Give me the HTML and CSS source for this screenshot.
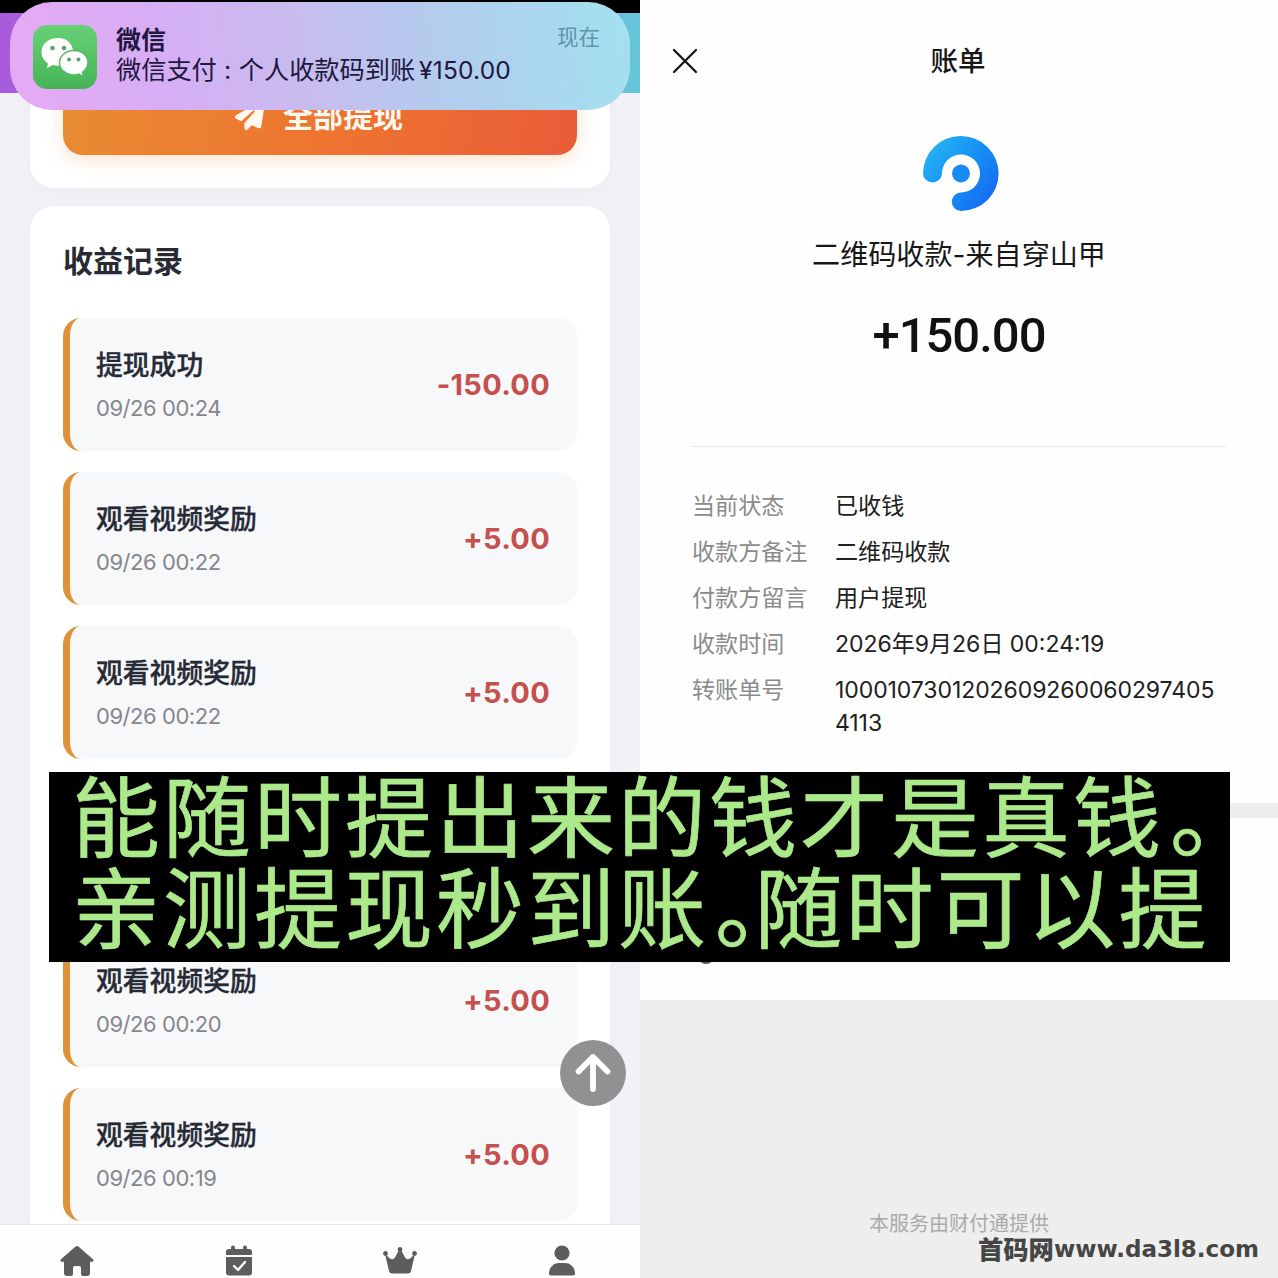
FILE: index.html
```
<!DOCTYPE html>
<html lang="zh-CN">
<head>
<meta charset="utf-8">
<title>账单</title>
<link rel="stylesheet" href="styles.css">
</head>
<body>
<div class="screen">
  <section class="wallet">
    <div class="status"></div>
    <div class="hero"></div>
    <div class="notice">
      <svg class="app-icon" viewBox="0 0 64 64">
        <defs><linearGradient id="wx" x1="0" y1="0" x2="0" y2="1"><stop offset="0" stop-color="#68d076"/><stop offset="1" stop-color="#45b456"/></linearGradient></defs>
        <rect width="64" height="64" rx="14" fill="url(#wx)"/>
        <path d="M25 13C15.500 13 8.500 19 8.500 27c0 5 2.700 9 6.500 11.500L14 43l6-3c8 2.500 20-2 20-13C40 19 34 13 25 13Z" fill="#fff"/>
        <path d="M41 25.500c-8 0-14.500 5.300-14.500 12.200S33 50 41 50c2 0 3.700-.3 5-.8l4.500 2.800-1-5c3.300-2.200 5.500-5.500 5.500-9.500 0-6.700-6-12-14-12Z" fill="#fff" stroke="#56b766" stroke-width="1.500"/>
        <g fill="#56a568"><circle cx="19.500" cy="23" r="2.300"/><circle cx="31" cy="23" r="2.300"/><circle cx="36" cy="34.500" r="2"/><circle cx="45.500" cy="34.500" r="2"/></g>
      </svg>
      <div class="notice-body">
        <div class="notice-title">微信</div>
        <div class="notice-text"><span>微信支付</span><span class="colon">:</span><span>个人收款码到账</span><span class="sum">¥150.00</span></div>
      </div>
      <div class="notice-time">现在</div>
    </div>
    <div class="card balance">
      <div class="withdraw">
        <svg class="plane" viewBox="0 0 512 512"><path fill="currentColor" d="M498 6c11 8 16 20 14 33l-64 416c-2 10-8 18-16 23s-19 6-28 2l-120-50-68 74c-9 10-23 13-35 8s-20-17-20-30v-84c0-4 2-8 4-11l168-183c6-6 6-16 0-22-6-6-15-6-22-1L107 362l-89-44C7 312 0 301 0 289s6-23 17-29L465 4c11-6 23-5 33 2Z"/></svg>
        <span>全部提现</span>
      </div>
    </div>
    <div class="card records">
      <h2>收益记录</h2>
      <div class="record"><div><b>提现成功</b><time>09/26 00:24</time></div><strong>-150.00</strong></div>
      <div class="record"><div><b>观看视频奖励</b><time>09/26 00:22</time></div><strong>+5.00</strong></div>
      <div class="record"><div><b>观看视频奖励</b><time>09/26 00:22</time></div><strong>+5.00</strong></div>
      <div class="record"></div>
      <div class="record"><div><b>观看视频奖励</b><time>09/26 00:20</time></div><strong>+5.00</strong></div>
      <div class="record"><div><b>观看视频奖励</b><time>09/26 00:19</time></div><strong>+5.00</strong></div>
    </div>
    <nav class="tabs">
      <svg width="34" height="32" viewBox="0 0 34 32"><path d="M15.600 1.500 1 14.200c-1.200 1.200-.5 2.600 1 2.600h2V28q0 3 3 3h4q2 0 2-2v-6q0-2 2-2h4q2 0 2 2v6q0 2 2 2h4q3 0 3-3V16.800h2c1.500 0 2.200-1.400 1-2.600L18.400 1.500q-1.400-1.100-2.800 0Z"/></svg>
      <svg width="28" height="32" viewBox="0 0 28 32"><path d="M1 10V7q0-3 3-3h2V2.500q0-2 2-2t2 2V4h8V2.500q0-2 2-2t2 2V4h2q3 0 3 3v3ZM1 12h26v15.500q0 3-3 3H4q-3 0-3-3Z"/><path d="m9 21 4 4 7-8" fill="none" stroke="#fff" stroke-width="2.400" stroke-linecap="round" stroke-linejoin="round"/></svg>
      <svg width="34" height="32" viewBox="0 0 34 32"><circle cx="2.500" cy="8.500" r="2.400"/><circle cx="17" cy="4.500" r="2.400"/><circle cx="31.500" cy="8.500" r="2.400"/><path d="m2 9 5 4.500q3 2 5-1L16 5h2l4 7.500q2 3 5 1L32 9l-4 17q-.7 2.500-3 2.500H9Q6.500 28.500 6 26Z"/></svg>
      <svg width="28" height="32" viewBox="0 0 28 32"><circle cx="14" cy="8" r="7.600"/><path d="M1 28.500C1 22 6 18 11 18h6c5 0 10 4 10 10.500q0 2-2 2H3q-2 0-2-2Z"/></svg>
    </nav>
    <svg class="to-top" viewBox="0 0 66 66"><circle cx="33" cy="33" r="33" fill="#919193"/><path d="M33 49V18M18.500 31.500 33 17l14.500 14.500" fill="none" stroke="#fff" stroke-width="5.800" stroke-linecap="round" stroke-linejoin="round"/></svg>
  </section>

  <section class="bill">
    <header>
      <svg class="close" viewBox="0 0 26 26"><path d="m2 2 22 22M24 2 2 24" stroke="#151515" stroke-width="2.300" stroke-linecap="round"/></svg>
      <h1>账单</h1>
    </header>
    <svg class="logo" viewBox="0 0 76 76">
      <defs><linearGradient id="lg" x1="0" y1=".2" x2=".9" y2=".9"><stop offset="0" stop-color="#24b5f4"/><stop offset=".55" stop-color="#168cf5"/><stop offset="1" stop-color="#166af2"/></linearGradient></defs>
      <path d="M0 37.500A37.800 37.500 0 1 1 38 75A9 9 0 0 1 38 56.500A19 19 0 1 0 19 37.500A9.500 9 0 0 1 0 37.500Z" fill="url(#lg)"/>
      <circle cx="38" cy="37.500" r="9" fill="#178bef"/>
    </svg>
    <p class="source">二维码收款-来自穿山甲</p>
    <p class="amount">+150.00</p>
    <dl>
      <dt>当前状态</dt><dd>已收钱</dd>
      <dt>收款方备注</dt><dd>二维码收款</dd>
      <dt>付款方留言</dt><dd>用户提现</dd>
      <dt>收款时间</dt><dd class="date">2026年9月26日 00:24:19</dd>
      <dt>转账单号</dt><dd class="serial">1000107301202609260060297405<br>4113</dd>
    </dl>
    <div class="band"></div>
    <div class="help"><i></i></div>
    <footer>本服务由财付通提供</footer>
  </section>

  <div class="banner"><p>能随时提出来的钱才是真钱<span class="stop">。</span></p><p>亲测提现秒到账<span class="stop half">。</span>随时可以提</p></div>
  <div class="site"><span class="site-name">首码网</span><span class="site-url">www.da3l8.com</span></div>
</div>
</body>
</html>
```
FILE: styles.css
```
* { box-sizing: border-box; margin: 0; padding: 0; }
body { font-family: Inter, "Noto Sans CJK SC", sans-serif; background: #fff; }
svg { display: block; flex: none; }
.screen { position: relative; width: 1278px; height: 1278px; overflow: hidden; display: flex; }

.wallet { position: relative; width: 640px; height: 1278px; background: #f1f1f6; display: flex; flex-direction: column; overflow: hidden; }
.status { height: 13px; background: #000; flex: none; }
.hero { height: 80px; flex: none; background: linear-gradient(90deg, #a85bdc, #8b83e0 50%, #66c5da); }
.notice { position: absolute; z-index: 2; left: 10px; top: 2px; width: 620px; height: 108px; border-radius: 42px; padding: 23px 30px 0 23px; display: flex; background: linear-gradient(180deg, #d8a8ff22 0%, #d8a8ff00 50%, #ffc8c844 100%) 0 0 / 72% 100% no-repeat, linear-gradient(90deg, #e0a5f5 0%, #d4abf5 25%, #c6bbf0 47%, #b0cfee 70%, #a0e1ef 100%); background: linear-gradient(82deg, #e6a9f3 0%, #d6aef5 25%, #c8bcee 47%, #b2cdee 70%, #a2e1ef 100%); color: #21173f; }
.app-icon { width: 64px; height: 64px; }
.notice-body { margin-left: 19px; flex: 1; }
.notice-title { font-size: 25px; font-weight: 700; line-height: 30px; }
.notice-text { font-size: 25.200px; line-height: 30px; display: flex; white-space: nowrap; }
.colon { width: 22px; text-align: center; }
.sum { margin-left: 4px; font-size: 24.500px; letter-spacing: .2px; }
.notice-time { font-size: 21.500px; line-height: 24px; color: #6195ac; }

.card { margin: 0 30px; background: #fff; border-radius: 24px; flex: none; box-shadow: 0 2px 14px #00000009; }
.balance { height: 95px; border-radius: 0 0 24px 24px; padding: 0 33px; }
.withdraw { height: 62px; border-radius: 0 0 20px 20px; background: linear-gradient(100deg, #e88b32, #ee7530 50%, #e95c38); box-shadow: 0 6px 18px #f2a35144; display: flex; justify-content: center; gap: 18px; padding-right: 2px; color: #fff8ee; font-size: 30px; font-weight: 700; line-height: 46px; }
.plane { width: 30px; height: 30px; margin-top: 7px; }
.records { margin-top: 18px; height: 1019px; border-radius: 24px 24px 0 0; padding: 33px 33px 0; }
.records h2 { font-size: 30px; line-height: 44px; font-weight: 700; color: #292a33; margin-bottom: 35px; }
.record { height: 133px; margin-bottom: 21px; border-left: 7px solid #df9239; border-radius: 18px; background: #f6f8fa; padding: 0 27px 0 26px; display: flex; align-items: center; justify-content: space-between; }
.record b { display: block; font-size: 26.800px; line-height: 38px; color: #272a35; margin-top: -1px; font-weight: 500; -webkit-text-stroke: .35px currentColor; }
.record time { display: block; font-size: 22px; line-height: 30px; color: #85878c; margin-top: 9px; letter-spacing: -.45px; }
.record strong { font-size: 29px; color: #c5504d; font-weight: 700; letter-spacing: .3px; }
.tabs { position: absolute; left: 0; right: 0; bottom: 0; height: 54px; background: #fefefe; border-top: 1px solid #e9e9ed; display: grid; grid-template-columns: 154px 169px 154px 170px; justify-items: center; padding-top: 20px; fill: #5d5d5f; }
.to-top { position: absolute; left: 560px; top: 1040px; width: 66px; height: 66px; }

.bill { width: 638px; height: 1278px; background: #fefefe; display: flex; flex-direction: column; align-items: center; color: #171717; }
.bill header { width: 100%; height: 136px; flex: none; display: grid; grid-template-columns: 90px 456px 90px; justify-items: center; padding-top: 41px; }
.close { width: 26px; height: 26px; margin-top: 7px; }
.bill h1 { font-size: 27.500px; font-weight: 500; line-height: 40px; }
.logo { width: 76px; height: 76px; margin-left: 3px; }
.source { margin-top: 23px; font-size: 28.100px; line-height: 40px; white-space: nowrap; }
.amount { margin-top: 31px; font-family: Roboto, sans-serif; font-weight: 500; font-size: 49px; line-height: 60px; letter-spacing: -1px; color: #111; }
.bill dl { width: 534px; margin-top: 80px; border-top: 1px solid #e8e8e8; padding-top: 43px; height: 357px; flex: none; display: grid; grid-template-columns: 143px 1fr; grid-auto-rows: max-content; row-gap: 13px; font-size: 23.100px; line-height: 33px; white-space: nowrap; }
.bill dt { color: #8b8b8b; }
.bill dd { color: #202020; }
.bill .date { font-size: 23px; }
.bill .serial { font-size: 23px; letter-spacing: -.08px; }
.band { width: 100%; height: 15px; flex: none; background: #ededed; }
.help { height: 182px; width: 100%; flex: none; padding: 130px 0 0 58px; }
.help i { display: block; width: 16px; height: 16px; border: 2px solid #555; border-radius: 50%; }
.bill footer { flex: 1; width: 100%; background: #eee; padding-top: 209px; text-align: center; color: #aaa; font-size: 20px; line-height: 30px; }

.banner { position: absolute; left: 49px; top: 772px; width: 1181px; height: 190px; background: #000; color: #ace98b; font: 400 88px/91px "Noto Sans CJK SC", sans-serif; letter-spacing: 3px; -webkit-text-stroke: .7px currentColor; padding-left: 23px; white-space: nowrap; }
.banner p { margin-top: -6px; margin-bottom: 6px; }
.stop { position: relative; left: 6px; }
.half { margin-right: -45.500px; }
.site { position: absolute; left: 978px; top: 1234px; display: flex; color: #454545; line-height: 30px; white-space: nowrap; }
.site-name { font: 900 25.300px/28px "Noto Sans CJK SC", sans-serif; }
.site-url { font: 700 23px/30px "DejaVu Sans", sans-serif; }
```
